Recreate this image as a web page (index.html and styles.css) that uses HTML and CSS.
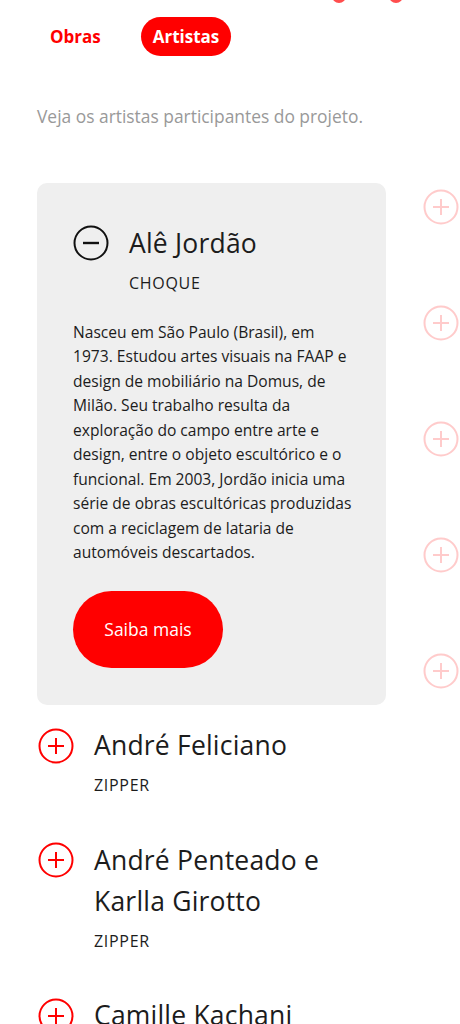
FILE: index.html
```html
<!DOCTYPE html>
<html lang="pt">
<head>
<meta charset="utf-8">
<link rel="stylesheet" href="styles.css">
</head>
<body>
<div class="topbar">
  <span class="dot"></span>
  <span class="dot"></span>
</div>
<nav class="tabs">
  <a class="tab">Obras</a>
  <a class="tab active">Artistas</a>
</nav>
<p class="intro">Veja os artistas participantes do projeto.</p>
<div class="slider">
  <div class="panel">
    <div class="card">
      <div class="item-head">
        <svg class="ico" viewBox="0 0 36 36"><circle cx="18" cy="18" r="16.5" fill="none" stroke="#111" stroke-width="2"/><path d="M10 18h16" stroke="#111" stroke-width="2.4"/></svg>
        <div class="item-text">
          <h2 class="name">Alê Jordão</h2>
          <div class="work">CHOQUE</div>
        </div>
      </div>
      <p class="bio">Nasceu em São Paulo (Brasil), em 1973. Estudou artes visuais na FAAP e design de mobiliário na Domus, de Milão. Seu trabalho resulta da exploração do campo entre arte e design, entre o objeto escultórico e o funcional. Em 2003, Jordão inicia uma série de obras escultóricas produzidas com a reciclagem de lataria de automóveis descartados.</p>
      <a class="btn">Saiba mais</a>
    </div>
    <div class="item">
      <svg class="ico" viewBox="0 0 36 36"><circle cx="18" cy="18" r="16.5" fill="none" stroke="#f00" stroke-width="2"/><path d="M10 18h16M18 10v16" stroke="#f00" stroke-width="2"/></svg>
      <div class="item-text">
        <h2 class="name">André Feliciano</h2>
        <div class="work">ZIPPER</div>
      </div>
    </div>
    <div class="item">
      <svg class="ico" viewBox="0 0 36 36"><circle cx="18" cy="18" r="16.5" fill="none" stroke="#f00" stroke-width="2"/><path d="M10 18h16M18 10v16" stroke="#f00" stroke-width="2"/></svg>
      <div class="item-text">
        <h2 class="name">André Penteado e Karlla Girotto</h2>
        <div class="work">ZIPPER</div>
      </div>
    </div>
    <div class="item">
      <svg class="ico" viewBox="0 0 36 36"><circle cx="18" cy="18" r="16.5" fill="none" stroke="#f00" stroke-width="2"/><path d="M10 18h16M18 10v16" stroke="#f00" stroke-width="2"/></svg>
      <div class="item-text">
        <h2 class="name">Camille Kachani</h2>
        <div class="work">ZIPPER</div>
      </div>
    </div>
  </div>
  <div class="peek">
    <svg class="ico" viewBox="0 0 36 36"><circle cx="18" cy="18" r="16.5" fill="none" stroke="#f00" stroke-width="2"/><path d="M10 18h16M18 10v16" stroke="#f00" stroke-width="2"/></svg>
    <svg class="ico" viewBox="0 0 36 36"><circle cx="18" cy="18" r="16.5" fill="none" stroke="#f00" stroke-width="2"/><path d="M10 18h16M18 10v16" stroke="#f00" stroke-width="2"/></svg>
    <svg class="ico" viewBox="0 0 36 36"><circle cx="18" cy="18" r="16.5" fill="none" stroke="#f00" stroke-width="2"/><path d="M10 18h16M18 10v16" stroke="#f00" stroke-width="2"/></svg>
    <svg class="ico" viewBox="0 0 36 36"><circle cx="18" cy="18" r="16.5" fill="none" stroke="#f00" stroke-width="2"/><path d="M10 18h16M18 10v16" stroke="#f00" stroke-width="2"/></svg>
    <svg class="ico" viewBox="0 0 36 36"><circle cx="18" cy="18" r="16.5" fill="none" stroke="#f00" stroke-width="2"/><path d="M10 18h16M18 10v16" stroke="#f00" stroke-width="2"/></svg>
  </div>
</div>
</body>
</html>
```
FILE: styles.css
```css
* { box-sizing: border-box; }
html, body { margin: 0; padding: 0; background: #fff; }
body {
  width: 460px;
  height: 1024px;
  overflow: hidden;
  font-family: "Open Sans", "Noto Sans", sans-serif;
  color: #1c1c1c;
}
.topbar {
  height: 3px;
  overflow: hidden;
  display: flex;
  align-items: flex-end;
  justify-content: flex-end;
  gap: 43px;
  padding-right: 57px;
}
.dot {
  width: 14px;
  height: 14px;
  border-radius: 50%;
  background: #ff4d4d;
  flex-shrink: 0;
}
.tabs {
  display: flex;
  gap: 28px;
  margin: 14px 0 0 38px;
}
.tab {
  height: 39px;
  padding: 0 12px;
  border-radius: 20px;
  display: flex;
  align-items: center;
  font-size: 17px;
  font-weight: 700;
  color: #f00;
}
.tab.active { background: #f00; color: #fff; }
.intro {
  margin: 48px 0 0 37px;
  font-size: 17.4px;
  line-height: 24px;
  color: #999;
}
.slider {
  display: flex;
  margin-top: 55px;
  padding-left: 37px;
}
.panel { width: 349px; flex-shrink: 0; }
.card {
  background: #efefef;
  border-radius: 10px;
  padding: 42px 32px 37px 36px;
}
.item-head, .item {
  display: flex;
  gap: 20px;
  align-items: flex-start;
}
.ico { width: 36px; height: 36px; flex-shrink: 0; display: block; }
.name {
  margin: 0;
  font-size: 26.5px;
  font-weight: 400;
  line-height: 41px;
  margin-top: -2.5px;
  letter-spacing: 0.2px;
}
.work {
  font-size: 16px;
  line-height: 24px;
  font-weight: 500;
  margin-top: 7px;
  letter-spacing: 0.7px;
}
.bio {
  margin: 25px 0 0 0;
  font-size: 15.6px;
  line-height: 24.5px;
}
.btn {
  margin-top: 26px;
  display: flex;
  align-items: center;
  justify-content: center;
  width: 150px;
  height: 77px;
  border-radius: 39px;
  background: #f00;
  color: #fff;
  font-size: 17.5px;
  font-weight: 500;
}
.item { margin-top: 45px; padding-left: 1px; }
.card + .item { margin-top: 23px; }
.peek {
  margin-left: 37px;
  padding-top: 6px;
  display: flex;
  flex-direction: column;
  gap: 80px;
  opacity: 0.2;
  flex-shrink: 0;
}
```
